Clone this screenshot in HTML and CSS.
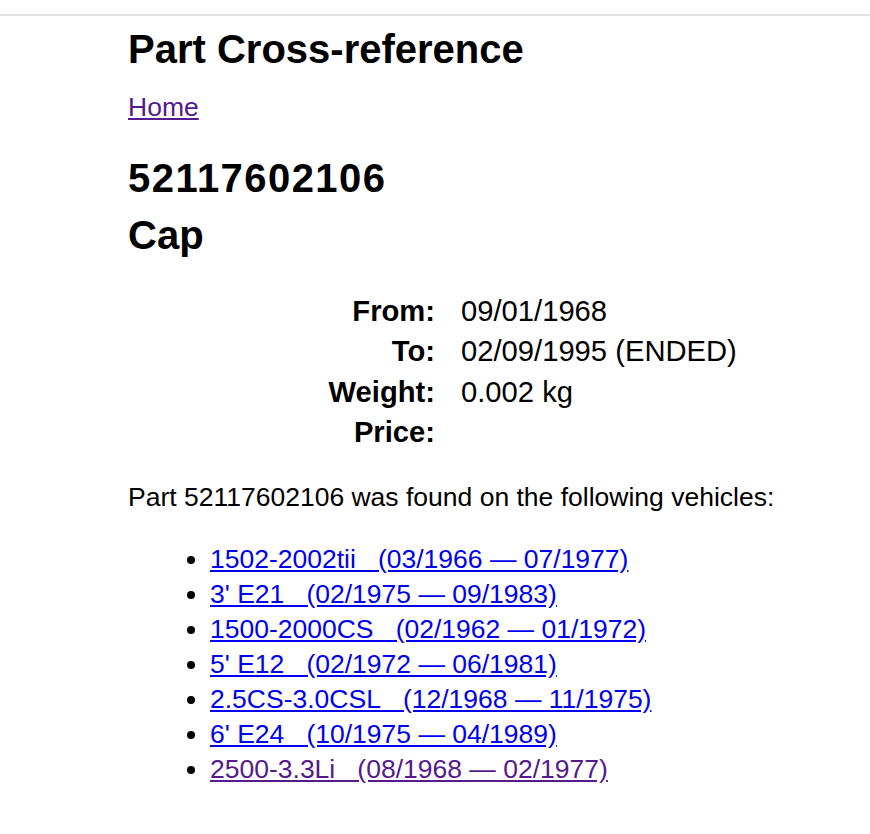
FILE: index.html
```html
<!DOCTYPE html>
<html>
<head>
    <title>52117602106 Cap - Part Cross-reference</title>
    <link rel="stylesheet" href="styles.css">
</head>
<body>
    <div class="topbar"></div>
    <div class="page">
        <h1>Part Cross-reference</h1>
        <p class="crumbs"><a href="#" class="visited">Home</a></p>

        <h2 class="part-title"><span class="part-no">52117602106</span><br>Cap</h2>

        <div class="details">
            <div class="label">From:</div><div class="value">09/01/1968</div>
            <div class="label">To:</div><div class="value">02/09/1995 (ENDED)</div>
            <div class="label">Weight:</div><div class="value">0.002 kg</div>
            <div class="label">Price:</div><div class="value"></div>
        </div>

        <p class="found">Part 52117602106 was found on the following vehicles:</p>

        <ul class="vehicles">
            <li><a href="#">1502-2002tii&nbsp;&nbsp;&nbsp;(03/1966 — 07/1977)</a></li>
            <li><a href="#">3' E21&nbsp;&nbsp;&nbsp;(02/1975 — 09/1983)</a></li>
            <li><a href="#">1500-2000CS&nbsp;&nbsp;&nbsp;(02/1962 — 01/1972)</a></li>
            <li><a href="#">5' E12&nbsp;&nbsp;&nbsp;(02/1972 — 06/1981)</a></li>
            <li><a href="#">2.5CS-3.0CSL&nbsp;&nbsp;&nbsp;(12/1968 — 11/1975)</a></li>
            <li><a href="#">6' E24&nbsp;&nbsp;&nbsp;(10/1975 — 04/1989)</a></li>
            <li><a href="#" class="visited">2500-3.3Li&nbsp;&nbsp;&nbsp;(08/1968 — 02/1977)</a></li>
        </ul>
    </div>
</body>
</html>
```

FILE: styles.css
```css
body { font-family: "Liberation Sans", Arial, Helvetica, sans-serif; font-size: 26.5px; color: #000; background: #fff; margin: 0; }
a { color: #0000ee; }
a.visited { color: #551a8b; }
.topbar { height: 14px; border-bottom: 2px solid #e3e3e3; }
.page { margin: 0 20px 0 128px; }
h1 { font-size: 40px; line-height: 48px; margin: 9px 0 17px; }
.crumbs { line-height: 35px; margin: 0; }
.part-title { font-size: 40px; line-height: 57px; margin: 25px 0 0; }
.part-no { letter-spacing: 1.45px; }
.details { display: grid; grid-template-columns: 307px 1fr; font-size: 29.2px; line-height: 40.3px; margin-top: 27px; }
.label { font-weight: bold; text-align: right; }
.value { padding-left: 26px; min-height: 40px; }
.found { line-height: 35px; margin: 28px 0 0; }
.vehicles { line-height: 35px; margin: 27px 0 0; padding-left: 82px; }
```
